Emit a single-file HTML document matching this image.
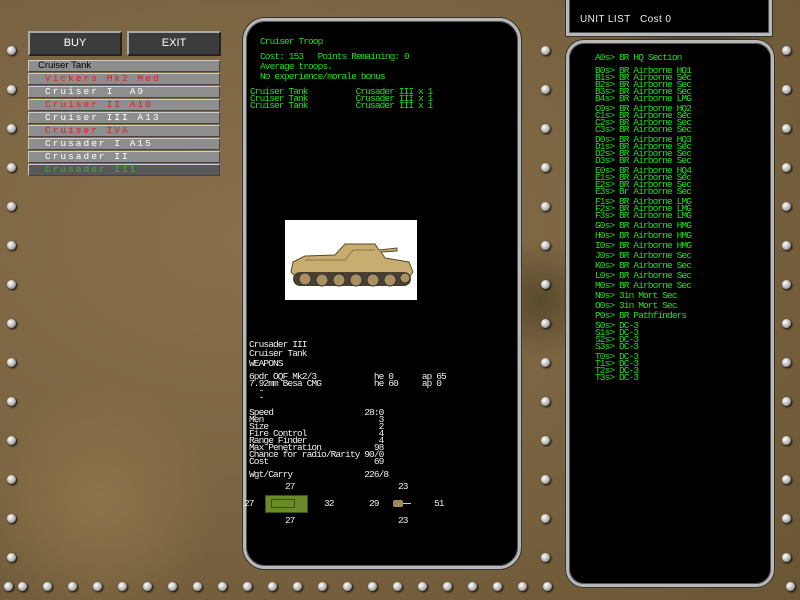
<!DOCTYPE html>
<html><head><meta charset="utf-8"><style>
*{margin:0;padding:0;box-sizing:border-box}
body{width:800px;height:600px;overflow:hidden;position:relative;font-family:"Liberation Mono",monospace;
background:radial-gradient(ellipse at 30% 40%,#88704a 0%,#7c6542 45%,#6a5634 100%);}
.bg2{position:absolute;inset:0;background:
radial-gradient(circle at 540px 300px,#5a4a2e 0,transparent 60px),
radial-gradient(circle at 700px 20px,#4a3e26 0,transparent 80px),
radial-gradient(circle at 100px 500px,#8c744a 0,transparent 120px);}
.panel{position:absolute;background:#000;border:3px solid #b8b8b8;box-shadow:inset 0 0 0 1px #555,0 0 0 1px #333;}
.t{position:absolute;white-space:pre;font-size:9.5px;line-height:8px;color:#20e020;letter-spacing:-0.9px}
.w{color:#eee}
.btn{position:absolute;top:31px;height:25px;width:94px;background:#3c3c3c;border:2px solid;border-color:#aaa #222 #222 #aaa;color:#fff;font:11px "Liberation Sans",sans-serif;text-align:center;line-height:21px}
.row{position:absolute;left:28px;width:192px;height:12px;background:#8e8e8e;border:1px solid;border-color:#ccc #444 #444 #ccc;font-size:9.5px;line-height:10px;letter-spacing:2px;padding-left:16px;white-space:pre}
.rv{position:absolute;width:9px;height:9px;border-radius:50%;background:radial-gradient(circle at 35% 35%,#fff,#bbb 50%,#555);box-shadow:1px 1px 2px #000}
</style></head><body>
<div class="bg2"></div>
<div id="rivets"></div>

<div class="btn" style="left:28px">BUY</div>
<div class="btn" style="left:127px">EXIT</div>
<div class="row" style="top:60px;color:#000;letter-spacing:0;padding-left:9px;font-family:'Liberation Sans',sans-serif">Cruiser Tank</div>
<div class="row" style="top:73px;color:#e02020">Vickers Mk2 Med</div>
<div class="row" style="top:86px;color:#fff">Cruiser I  A9</div>
<div class="row" style="top:99px;color:#e02020">Cruiser II A10</div>
<div class="row" style="top:112px;color:#fff">Cruiser III A13</div>
<div class="row" style="top:125px;color:#e02020">Cruiser IVA</div>
<div class="row" style="top:138px;color:#fff">Crusader I A15</div>
<div class="row" style="top:151px;color:#fff">Crusader II</div>
<div class="row" style="top:164px;color:#20c020;background:#585858">Crusader III</div>

<div class="panel" style="left:243px;top:18px;width:278px;height:551px;border-radius:22px"></div>
<div class="panel" style="left:566px;top:-4px;width:206px;height:40px;border-radius:0"></div>
<div class="panel" style="left:566px;top:40px;width:208px;height:547px;border-radius:18px"></div>

<div style="position:absolute;left:580px;top:14px;font:10px 'Liberation Sans',sans-serif;color:#eee;white-space:pre;letter-spacing:0.4px">UNIT LIST   Cost 0</div>

<div class="t" style="left:260px;top:38px">Cruiser Troop</div>
<div class="t" style="left:260px;top:53px">Cost: 153   Points Remaining: 0</div>
<div class="t" style="left:260px;top:63px">Average troops.</div>
<div class="t" style="left:260px;top:73px">No experience/morale bonus</div>
<div class="t" style="left:250px;top:88px;line-height:7px">Cruiser Tank          Crusader III x 1
Cruiser Tank          Crusader III x 1
Cruiser Tank          Crusader III x 1</div>

<div style="position:absolute;left:285px;top:220px;width:132px;height:80px;background:#fff">
<svg width="132" height="80" viewBox="0 0 132 80">
<path d="M8 42 L20 36 L50 35 L60 24 L90 24 L94 30 L112 28 L112 31 L96 32 L100 38 L124 42 L128 52 L122 60 L14 60 L6 52 Z" fill="#c8ad70" stroke="#5a4a2a"/>
<path d="M20 40 L60 40 L68 30 L90 30" stroke="#8b7448" fill="none"/>
<rect x="8" y="52" width="118" height="14" rx="7" fill="#4a4030"/>
<g fill="#a89060" stroke="#333"><circle cx="20" cy="59" r="6"/><circle cx="37" cy="60" r="6"/><circle cx="54" cy="60" r="6"/><circle cx="71" cy="60" r="6"/><circle cx="88" cy="60" r="6"/><circle cx="105" cy="60" r="6"/><circle cx="120" cy="58" r="5"/></g>
</svg></div>

<div class="t w" style="left:249px;top:340px;line-height:9px">Crusader III
Cruiser Tank</div>
<div class="t w" style="left:249px;top:360px">WEAPONS</div>
<div class="t w" style="left:249px;top:373px;line-height:7px">6pdr OQF Mk2/3            he 0      ap 65
7.92mm Besa CMG           he 60     ap 0
  -
  -</div>
<div class="t w" style="left:249px;top:409px;line-height:7px">Speed                   28:0
Men                        3
Size                       2
Fire Control               4
Range Finder               4
Max Penetration           98
Chance for radio/Rarity 90/0
Cost                      69</div>
<div class="t w" style="left:249px;top:471px">Wgt/Carry               226/8</div>
<div class="t w" style="left:285px;top:483px">27</div>
<div class="t w" style="left:398px;top:483px">23</div>
<div class="t w" style="left:244px;top:500px">27</div>
<div class="t w" style="left:324px;top:500px">32</div>
<div class="t w" style="left:369px;top:500px">29</div>
<div class="t w" style="left:434px;top:500px">51</div>
<div class="t w" style="left:285px;top:517px">27</div>
<div class="t w" style="left:398px;top:517px">23</div>
<div style="position:absolute;left:265px;top:495px;width:43px;height:18px;background:#6b8a2a;border:1px solid #3d5015"></div>
<div style="position:absolute;left:271px;top:499px;width:24px;height:9px;border:1px solid #3d5015"></div>
<div style="position:absolute;left:393px;top:500px;width:10px;height:7px;background:#9a8a60;border-radius:2px"></div>
<div style="position:absolute;left:403px;top:503px;width:8px;height:1px;background:#ccc"></div>

<div class="t" id="ul" style="left:595px;top:54px;line-height:7px"></div>

<script>
var L=[[0,"A0s> BR HQ Section"],[13,"B0s> BR Airborne HQ1"],[7,"B1s> BR Airborne Sec"],[7,"B2s> BR Airborne Sec"],[7,"B3s> BR Airborne Sec"],[7,"B4s> BR Airborne LMG"],
[10,"C0s> BR Airborne HQ2"],[7,"C1s> BR Airborne Sec"],[7,"C2s> BR Airborne Sec"],[7,"C3s> BR Airborne Sec"],
[10,"D0s> BR Airborne HQ3"],[7,"D1s> BR Airborne Sec"],[7,"D2s> BR Airborne Sec"],[7,"D3s> BR Airborne Sec"],
[10,"E0s> BR Airborne HQ4"],[7,"E1s> BR Airborne Sec"],[7,"E2s> BR Airborne Sec"],[7,"E3s> Br Airborne Sec"],
[10,"F1s> BR Airborne LMG"],[7,"F2s> BR Airborne LMG"],[7,"F3s> BR Airborne LMG"],[10,"G0s> BR Airborne HMG"],[10,"H0s> BR Airborne HMG"],[10,"I0s> BR Airborne HMG"],[10,"J0s> BR Airborne Sec"],[10,"K0s> BR Airborne Sec"],[10,"L0s> BR Airborne Sec"],[10,"M0s> BR Airborne Sec"],[10,"N0s> 3in Mort Sec"],[10,"O0s> 3in Mort Sec"],[10,"P0s> BR Pathfinders"],
[10,"S0s> DC-3"],[7,"S1s> DC-3"],[7,"S2s> DC-3"],[7,"S3s> DC-3"],[10,"T0s> DC-3"],[7,"T1s> DC-3"],[7,"T2s> DC-3"],[7,"T3s> DC-3"]];
var h="",y=54;L.forEach(function(a){y+=a[0];h+='<div class="t" style="left:595px;top:'+y+'px">'+a[1]+'</div>';});
document.getElementById('ul').outerHTML=h;
var r="";function R(x,y){r+='<div class="rv" style="left:'+(x-4)+'px;top:'+(y-4)+'px"></div>';}
for(var yy=50;yy<580;yy+=39){R(11,yy);R(545,yy);R(786,yy);}
for(var xx=22;xx<560;xx+=25)R(xx,586);
R(8,586);R(790,586);
document.getElementById('rivets').innerHTML=r;
</script>
</body></html>
